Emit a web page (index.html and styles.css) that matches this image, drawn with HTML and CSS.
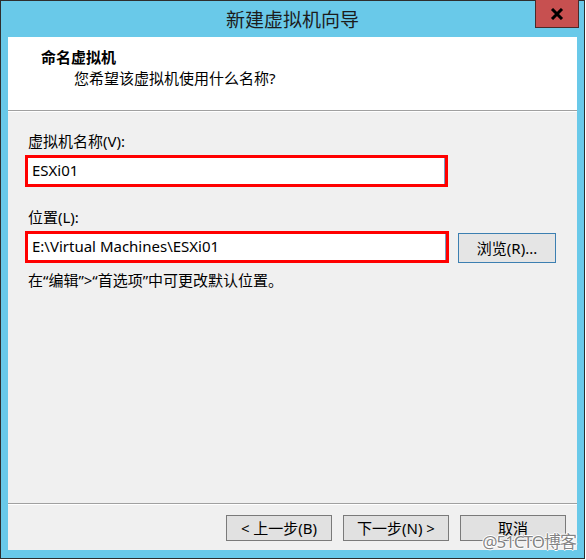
FILE: index.html
```html
<!DOCTYPE html>
<html lang="zh-CN">
<head>
<meta charset="utf-8">
<title>新建虚拟机向导</title>
<link rel="stylesheet" href="styles.css">
</head>
<body>
<div class="window">
  <div class="titlebar">
    <span class="title">新建虚拟机向导</span>
    <div class="close">
      <svg width="14" height="12" viewBox="0 0 14 12"><path d="M2 1 L12 11 M12 1 L2 11" stroke="#000" stroke-width="3" fill="none"/></svg>
    </div>
  </div>
  <div class="client">
    <div class="header">
      <div class="h-title">命名虚拟机</div>
      <div class="h-sub">您希望该虚拟机使用什么名称?</div>
    </div>
    <div class="main">
      <div class="label">虚拟机名称(V):</div>
      <div class="field"><span class="value">ESXi01</span></div>
      <div class="label label2">位置(L):</div>
      <div class="row">
        <div class="field field2"><span class="value">E:\Virtual Machines\ESXi01</span></div>
        <div class="btn browse">浏览(R)...</div>
      </div>
      <div class="hint">在“编辑”&gt;“首选项”中可更改默认位置。</div>
    </div>
    <div class="footer">
      <div class="btn fbtn">&lt; 上一步(B)</div>
      <div class="btn fbtn">下一步(N) &gt;</div>
      <div class="btn fbtn">取消</div>
    </div>
  </div>
  <div class="watermark">@51CTO博客</div>
</div>
</body>
</html>
```
FILE: styles.css
```css
html, body {
  margin: 0;
  padding: 0;
  background: #ffffff;
  overflow: hidden;
}
body {
  font-family: "Noto Sans", "Noto Sans CJK SC", sans-serif;
  font-size: 15px;
  color: #000;
}
.window {
  position: relative;
  width: 585px;
  height: 559px;
  box-sizing: border-box;
  border: 1px solid #2e2e2e;
  background: #69c9e9;
  display: flex;
  flex-direction: column;
}
.titlebar {
  height: 36px;
  display: flex;
  align-items: center;
  justify-content: center;
  flex: none;
}
.title {
  font-family: "Noto Sans CJK SC", sans-serif;
  font-size: 19px;
  line-height: 24px;
  color: #1c1c1c;
  margin-top: -1px;
}
.close {
  position: absolute;
  top: -1px;
  right: 5px;
  width: 44px;
  height: 28px;
  box-sizing: border-box;
  background: #c75050;
  border: 1px solid #4a2a2a;
  border-top: none;
  display: flex;
  align-items: center;
  justify-content: center;
}
.client {
  flex: 1;
  margin: 0 7px 8px 7px;
  background: #f0f0f0;
  display: flex;
  flex-direction: column;
}
.header {
  height: 73px;
  background: #fff;
  border-bottom: 1px solid #a0a0a0;
  box-shadow: 0 1px 0 #ffffff;
  display: flex;
  flex-direction: column;
}
.h-title {
  font-weight: bold;
  font-size: 15px;
  line-height: 20px;
  margin: 10px 0 0 33px;
}
.h-sub {
  line-height: 20px;
  margin: 1px 0 0 66px;
}
.main {
  flex: 1;
  padding: 20px 0 0 17px;
  display: flex;
  flex-direction: column;
  align-items: flex-start;
}
.label {
  line-height: 20px;
  padding-left: 3px;
}
.label2 {
  margin-top: 20px;
}
.field {
  margin-top: 4px;
  width: 423px;
  height: 32px;
  box-sizing: border-box;
  border: 3px solid #ff0000;
  background: #fff;
  box-shadow: inset -1px 0 0 #7a9cc0;
  display: flex;
  align-items: center;
  padding-left: 4px;
}
.field2 {
  width: 424px;
  margin-top: 0;
}
.value {
  line-height: 20px;
  margin-top: -2px;
}
.row {
  margin-top: 4px;
  display: flex;
  align-items: flex-start;
  gap: 9px;
}
.btn {
  box-sizing: border-box;
  background: #e1e1e1;
  border: 1px solid #7a7a7a;
  display: flex;
  align-items: center;
  justify-content: center;
  line-height: 20px;
}
.browse {
  margin-top: 2px;
  width: 98px;
  height: 30px;
  border-color: #3c7fb1;
  background: #e5e5e5;
}
.hint {
  margin-top: 7px;
  line-height: 20px;
  padding-left: 3px;
}
.footer {
  flex: none;
  border-top: 1px solid #a0a0a0;
  box-shadow: inset 0 1px 0 #ffffff;
  padding: 11px 11px 9px 0;
  display: flex;
  justify-content: flex-end;
  gap: 11px;
}
.fbtn {
  width: 106px;
  height: 26px;
}
.watermark {
  position: absolute;
  right: 8px;
  top: 529px;
  white-space: nowrap;
  font-family: "Noto Sans", "Noto Sans CJK SC", sans-serif;
  font-size: 17px;
  line-height: 24px;
  color: rgba(110, 110, 110, 0.85);
  text-shadow: 1px 0 0 #fff, -1px 0 0 #fff, 0 1px 0 #fff, 0 -1px 0 #fff;
  letter-spacing: -1px;
}
```
